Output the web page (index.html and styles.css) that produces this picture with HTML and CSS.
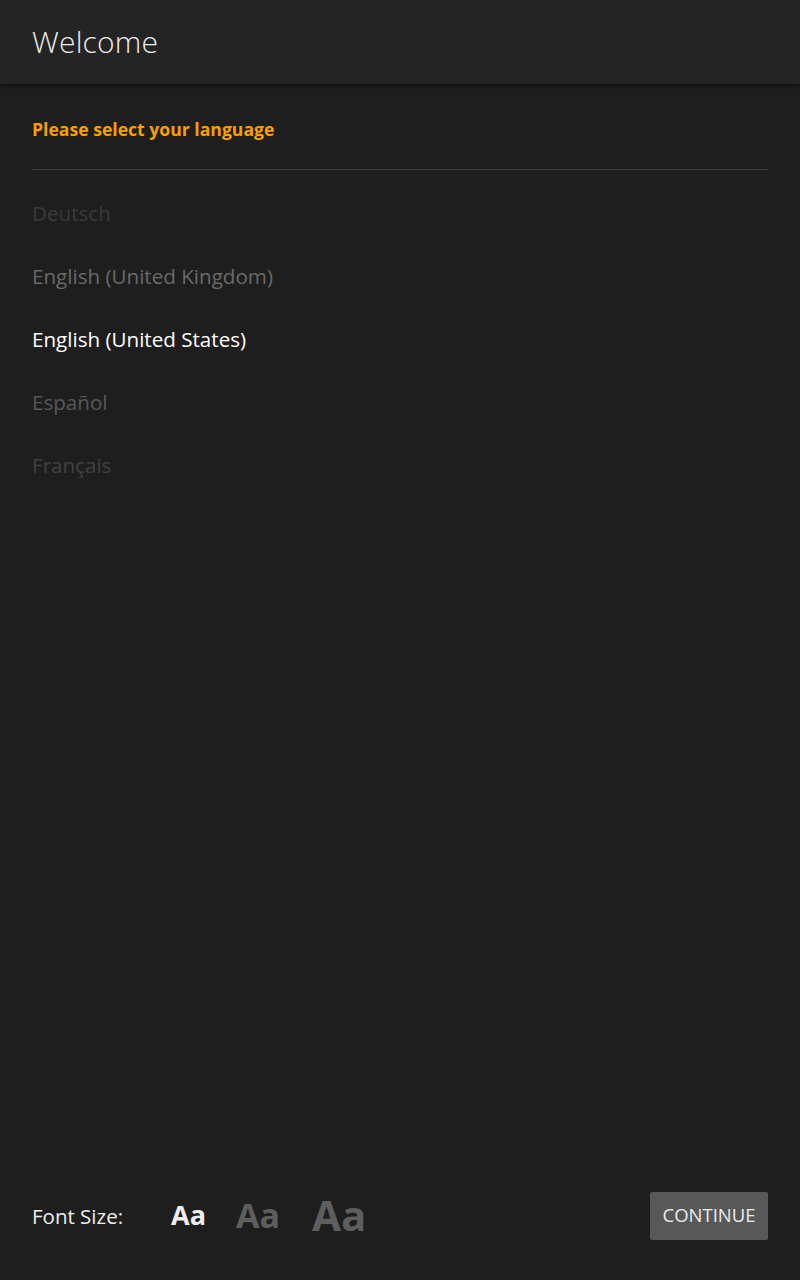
FILE: index.html
```html
<!DOCTYPE html>
<html>
<head>
<meta charset="utf-8">
<link rel="stylesheet" href="styles.css">
</head>
<body>
<div class="app">
  <header class="topbar">
    <h1 class="title">Welcome</h1>
  </header>
  <main class="content">
    <div class="prompt">Please select your language</div>
    <ul class="langs">
      <li class="lang fade-4">Deutsch</li>
      <li class="lang fade-2">English (United Kingdom)</li>
      <li class="lang selected">English (United States)</li>
      <li class="lang fade-2b">Español</li>
      <li class="lang fade-4b">Français</li>
    </ul>
  </main>
  <footer class="footer">
    <div class="fontsize">
      <span class="fs-label">Font Size:</span>
      <span class="aa aa-s active">Aa</span>
      <span class="aa aa-m">Aa</span>
      <span class="aa aa-l">Aa</span>
    </div>
    <button class="continue">CONTINUE</button>
  </footer>
</div>
</body>
</html>
```
FILE: styles.css
```css
* { box-sizing: border-box; }
html, body { margin: 0; padding: 0; }
body {
  background: #1e1e1e;
  font-family: "Open Sans", "Noto Sans", sans-serif;
  color: #fff;
}
.app {
  width: 800px;
  height: 1280px;
  display: flex;
  flex-direction: column;
}
.topbar {
  height: 84px;
  background: #242424;
  box-shadow: 0 2px 4px rgba(0,0,0,0.45);
  display: flex;
  align-items: center;
  padding: 0 32px;
  position: relative;
  z-index: 1;
}
.title {
  margin: 0;
  font-weight: 300;
  font-size: 30px;
  color: #ececec;
  letter-spacing: 0.2px;
  margin-top: -2px;
}
.content {
  flex: 1;
  padding: 0 32px;
}
.prompt {
  color: #f7a000;
  font-weight: 700;
  font-size: 17.6px;
  padding-top: 33px;
  height: 86px;
  border-bottom: 1px solid #3a3a3a;
}
.langs {
  list-style: none;
  margin: 0;
  padding: 12px 0 0;
}
.lang {
  height: 63px;
  line-height: 63px;
  font-size: 20.6px;
  color: #666;
}
.lang.fade-4 { color: #3b3b3b; }
.lang.fade-2 { color: #6a6a6a; }
.lang.selected { color: #fff; }
.lang.fade-2b { color: #585858; }
.lang.fade-4b { color: #424242; }
.footer {
  height: 126px;
  padding: 0 32px 2px;
  display: flex;
  align-items: center;
  justify-content: space-between;
}
.fontsize {
  display: flex;
  align-items: center;
}
.fs-label {
  font-size: 20.5px;
  color: #eee;
  margin-right: 48px;
}
.aa {
  font-weight: 700;
  color: #5e5e5e;
  line-height: 1;
  margin-top: -3px;
}
.aa.active { color: #eee; }
.aa-s { font-size: 27px; margin-right: 30px; }
.aa-m { font-size: 34px; margin-right: 32px; }
.aa-l { font-size: 42px; }
.continue {
  width: 118px;
  height: 48px;
  background: #585858;
  border: none;
  border-radius: 2px;
  color: #ececec;
  font-family: "Open Sans", "Noto Sans", sans-serif;
  font-size: 18.5px;
  padding: 0 0 3px;
}
```
